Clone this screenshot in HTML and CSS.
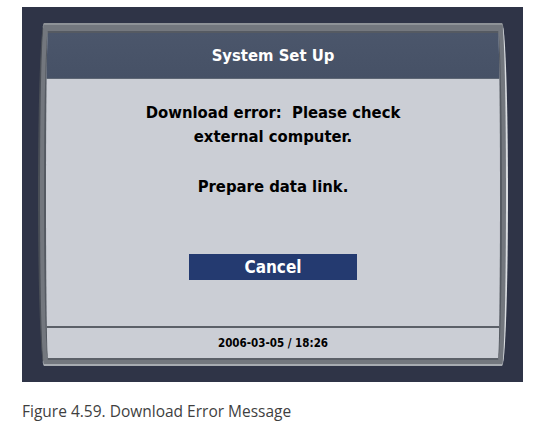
FILE: index.html
```html
<!DOCTYPE html>
<html>
<head>
<title>System Set Up</title>
<link rel="stylesheet" href="styles.css">
</head>
<body>
<div class="device">
<div class="bezel">
<div class="screen">
<div class="title">System Set Up</div>
<div class="message">
<p>Download error:&nbsp; Please check<br>external computer.</p>
<p>Prepare data link.</p>
<div class="actions"><button class="btn">Cancel</button></div>
</div>
<div class="footer">2006-03-05 / 18:26</div>
</div>
</div>
</div>
<div class="caption">Figure 4.59. Download Error Message</div>
</body>
</html>
```
FILE: styles.css
```css
body{margin:7px 0 0 22px;background:#fff;font-family:"DejaVu Sans Condensed","DejaVu Sans",sans-serif}
.device{width:501px;height:375px;box-sizing:border-box;background:#2f3447;padding:16px 15px 16px 16px}
.bezel{height:100%;box-sizing:border-box;background:#73777e;border-radius:6px/50%;border-top:2px solid #8e9297;border-left:2px solid #4a4f57;border-right:2px solid #d9dce0;border-bottom:2px solid #a7abb1;padding:6px 4px 4px}
.screen{height:100%;box-sizing:border-box;background:#cbced5;border:2px solid #555a62;border-bottom-color:#5b6068;border-radius:4px/50%;display:flex;flex-direction:column;overflow:hidden}
.title{height:45px;flex:none;background:linear-gradient(#4b566b,#465166);color:#fff;font-weight:bold;font-size:16.5px;display:flex;align-items:center;justify-content:center;border-bottom:1px solid #5d6674}
.message{flex:1;text-align:center;font-weight:bold;font-size:16.5px;line-height:24px;color:#000;padding-top:22px}
.message p{margin:0 0 26px}
.actions{padding-top:29px}
.btn{width:168px;height:26px;background:#243a70;color:#fff;border:none;border-radius:0;font-family:inherit;font-weight:bold;font-size:17px;padding:0;line-height:26px}
.footer{height:30px;flex:none;border-top:2px solid #5b6068;display:flex;align-items:center;justify-content:center;font-weight:bold;font-size:11.5px;color:#000}
.caption{margin-top:18px;font-family:"Open Sans",sans-serif;font-size:15.5px;color:#3f3f3f}
```
